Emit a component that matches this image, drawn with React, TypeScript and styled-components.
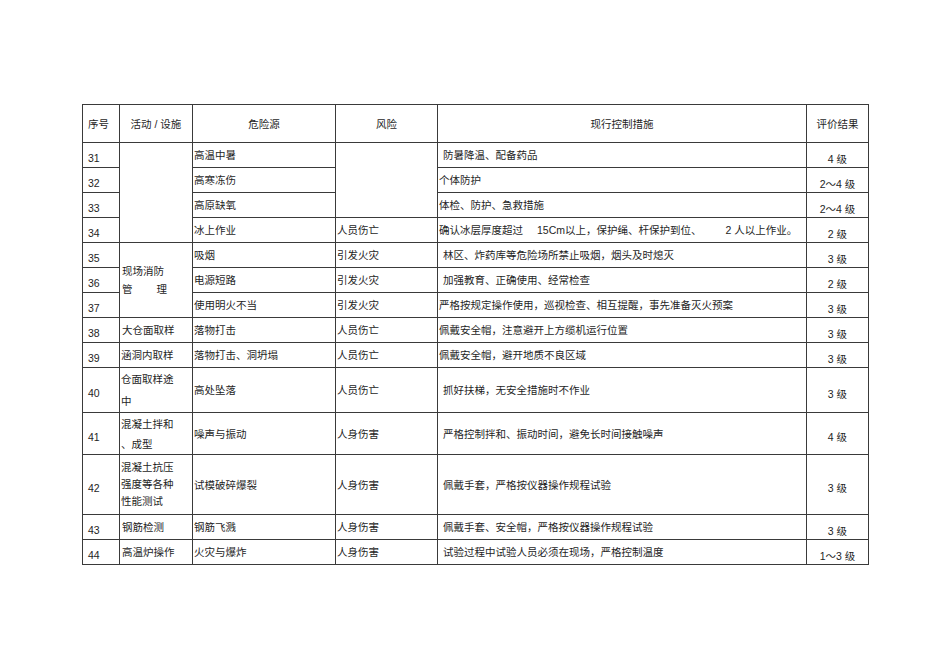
import React from "react";
import styled, { createGlobalStyle } from "styled-components";

const GlobalStyle = createGlobalStyle`
  html, body { margin: 0; padding: 0; background: #ffffff; }
  body {
    font-family: "Liberation Sans", "Noto Sans CJK SC", sans-serif;
    color: #1e1e1e;
  }
`;

const Page = styled.div`
  padding: 104px 0 40px 82px;
`;

const Table = styled.table`
  border-collapse: collapse;
  table-layout: fixed;
  width: 787px;
  font-size: 10.5px;
  font-family: "Liberation Sans", "Noto Sans CJK SC", sans-serif;
  border: 1px solid #2e2e2e;
`;

const Row = styled.tr<{ $h: number }>`
  height: ${(p) => p.$h}px;
`;

const HeadCell = styled.th<{ $align?: string }>`
  border: 1px solid #3a3a3a;
  font-weight: 400;
  text-align: ${(p) => p.$align || "center"};
  padding: 0 0 0 ${(p) => (p.$align === "left" ? 5 : 0)}px;
  vertical-align: middle;
  white-space: nowrap;
`;

const Cell = styled.td<{ $pad?: number; $lh?: number }>`
  border: 1px solid #3a3a3a;
  text-align: left;
  vertical-align: middle;
  padding: 0 0 0 ${(p) => p.$pad ?? 1}px;
  line-height: ${(p) => p.$lh ?? 14}px;
  white-space: nowrap;
`;

const NumCell = styled.td`
  border: 1px solid #3a3a3a;
  text-align: left;
  vertical-align: middle;
  padding: 6px 0 0 5px;
  white-space: nowrap;
`;

const RateCell = styled.td`
  border: 1px solid #3a3a3a;
  text-align: center;
  vertical-align: middle;
  padding: 6px 0 0 0;
  white-space: nowrap;
`;

const Gap = styled.span<{ $w: number }>`
  display: inline-block;
  width: ${(p) => p.$w}px;
`;

const Line = styled.div`
  display: block;
`;

type R = {
  n: string;
  hazard: string;
  risk?: string;
  measure: React.ReactNode;
  mpad: number;
  rate: string;
};

export default function App() {
  const fireRows: R[] = [
    { n: "35", hazard: "吸烟", risk: "引发火灾", measure: "林区、炸药库等危险场所禁止吸烟，烟头及时熄灭", mpad: 5, rate: "3 级" },
    { n: "36", hazard: "电源短路", risk: "引发火灾", measure: "加强教育、正确使用、经常检查", mpad: 5, rate: "2 级" },
    { n: "37", hazard: "使用明火不当", risk: "引发火灾", measure: "严格按规定操作使用，巡视检查、相互提醒，事先准备灭火预案", mpad: 1, rate: "3 级" },
  ];

  return (
    <Page>
      <GlobalStyle />
      <Table>
        <colgroup>
          <col style={{ width: 37 }} />
          <col style={{ width: 73 }} />
          <col style={{ width: 143 }} />
          <col style={{ width: 102 }} />
          <col style={{ width: 369 }} />
          <col style={{ width: 62 }} />
        </colgroup>
        <thead>
          <Row $h={38}>
            <HeadCell $align="left">序号</HeadCell>
            <HeadCell>活动 / 设施</HeadCell>
            <HeadCell>危险源</HeadCell>
            <HeadCell>风险</HeadCell>
            <HeadCell>现行控制措施</HeadCell>
            <HeadCell>评价结果</HeadCell>
          </Row>
        </thead>
        <tbody>
          <Row $h={25}>
            <NumCell>31</NumCell>
            <Cell rowSpan={4} />
            <Cell>高温中暑</Cell>
            <Cell rowSpan={3} />
            <Cell $pad={5}>防暑降温、配备药品</Cell>
            <RateCell>4 级</RateCell>
          </Row>
          <Row $h={25}>
            <NumCell>32</NumCell>
            <Cell>高寒冻伤</Cell>
            <Cell $pad={1}>个体防护</Cell>
            <RateCell>2～4 级</RateCell>
          </Row>
          <Row $h={25}>
            <NumCell>33</NumCell>
            <Cell>高原缺氧</Cell>
            <Cell $pad={1}>体检、防护、急救措施</Cell>
            <RateCell>2～4 级</RateCell>
          </Row>
          <Row $h={25}>
            <NumCell>34</NumCell>
            <Cell>冰上作业</Cell>
            <Cell>人员伤亡</Cell>
            <Cell $pad={1}>
              确认冰层厚度超过<Gap $w={14} />15Cm以上，保护绳、杆保护到位、<Gap $w={24} />2 人以上作业。
            </Cell>
            <RateCell>2 级</RateCell>
          </Row>
          {fireRows.map((r, i) => (
            <Row $h={25} key={r.n}>
              <NumCell>{r.n}</NumCell>
              {i === 0 && (
                <Cell rowSpan={3} $pad={2} $lh={18}>
                  <Line>现场消防</Line>
                  <Line>管<Gap $w={24} />理</Line>
                </Cell>
              )}
              <Cell>{r.hazard}</Cell>
              <Cell>{r.risk}</Cell>
              <Cell $pad={r.mpad}>{r.measure}</Cell>
              <RateCell>{r.rate}</RateCell>
            </Row>
          ))}
          <Row $h={25}>
            <NumCell>38</NumCell>
            <Cell $pad={2}>大仓面取样</Cell>
            <Cell>落物打击</Cell>
            <Cell>人员伤亡</Cell>
            <Cell $pad={1}>佩戴安全帽，注意避开上方缆机运行位置</Cell>
            <RateCell>3 级</RateCell>
          </Row>
          <Row $h={25}>
            <NumCell>39</NumCell>
            <Cell $pad={1}>涵洞内取样</Cell>
            <Cell>落物打击、洞坍塌</Cell>
            <Cell>人员伤亡</Cell>
            <Cell $pad={1}>佩戴安全帽，避开地质不良区域</Cell>
            <RateCell>3 级</RateCell>
          </Row>
          <Row $h={43}>
            <NumCell>40</NumCell>
            <Cell $pad={1} $lh={22}>
              <Line>仓面取样途</Line>
              <Line>中</Line>
            </Cell>
            <Cell>高处坠落</Cell>
            <Cell>人员伤亡</Cell>
            <Cell $pad={5}>抓好扶梯，无安全措施时不作业</Cell>
            <RateCell>3 级</RateCell>
          </Row>
          <Row $h={42}>
            <NumCell>41</NumCell>
            <Cell $pad={1} $lh={20}>
              <Line>混凝土拌和</Line>
              <Line>、成型</Line>
            </Cell>
            <Cell>噪声与振动</Cell>
            <Cell>人身伤害</Cell>
            <Cell $pad={5}>严格控制拌和、振动时间，避免长时间接触噪声</Cell>
            <RateCell>4 级</RateCell>
          </Row>
          <Row $h={60}>
            <NumCell>42</NumCell>
            <Cell $pad={1} $lh={17}>
              <Line>混凝土抗压</Line>
              <Line>强度等各种</Line>
              <Line>性能测试</Line>
            </Cell>
            <Cell>试模破碎爆裂</Cell>
            <Cell>人身伤害</Cell>
            <Cell $pad={5}>佩戴手套，严格按仪器操作规程试验</Cell>
            <RateCell>3 级</RateCell>
          </Row>
          <Row $h={25}>
            <NumCell>43</NumCell>
            <Cell $pad={2}>钢筋检测</Cell>
            <Cell>钢筋飞溅</Cell>
            <Cell>人身伤害</Cell>
            <Cell $pad={5}>佩戴手套、安全帽，严格按仪器操作规程试验</Cell>
            <RateCell>3 级</RateCell>
          </Row>
          <Row $h={25}>
            <NumCell>44</NumCell>
            <Cell $pad={2}>高温炉操作</Cell>
            <Cell>火灾与爆炸</Cell>
            <Cell>人身伤害</Cell>
            <Cell $pad={5}>试验过程中试验人员必须在现场，严格控制温度</Cell>
            <RateCell>1～3 级</RateCell>
          </Row>
        </tbody>
      </Table>
    </Page>
  );
}
